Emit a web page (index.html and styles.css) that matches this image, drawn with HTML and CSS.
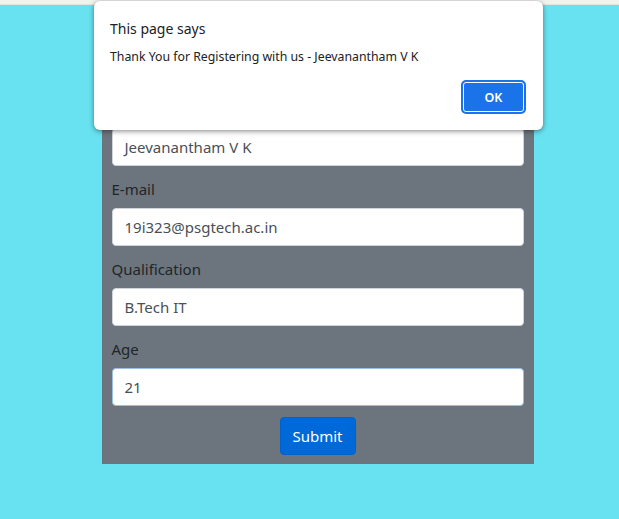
FILE: index.html
```html
<!DOCTYPE html>
<html lang="en">
<head>
<meta charset="utf-8">
<title>Registration</title>
<link rel="stylesheet" href="styles.css">
</head>
<body>
<div class="topbar"></div>
<main class="page">
  <form class="panel">
    <div class="group">
      <label class="label">Name</label>
      <div class="input">Jeevanantham V K</div>
    </div>
    <div class="group">
      <label class="label">E-mail</label>
      <div class="input">19i323@psgtech.ac.in</div>
    </div>
    <div class="group">
      <label class="label">Qualification</label>
      <div class="input">B.Tech IT</div>
    </div>
    <div class="group group-last">
      <label class="label">Age</label>
      <div class="input input-focus">21</div>
    </div>
    <div class="actions">
      <button type="button" class="submit">Submit</button>
    </div>
  </form>
</main>
<div class="dialog">
  <div class="dialog-title">This page says</div>
  <div class="dialog-msg">Thank You for Registering with us - Jeevanantham V K</div>
  <div class="dialog-actions">
    <button type="button" class="ok">OK</button>
  </div>
</div>
</body>
</html>
```
FILE: styles.css
```css
* { box-sizing: border-box; }
html, body { margin: 0; padding: 0; }
body {
  background: #68e2f0;
  font-family: "Noto Sans", "Open Sans", sans-serif;
  width: 619px;
  height: 519px;
  overflow: hidden;
  position: relative;
}
.topbar {
  height: 5px;
  background: #f1f1f1;
  border-bottom: 1px solid #e2e2e2;
}
.page {
  display: flex;
  justify-content: center;
  padding-left: 17px;
}
.panel {
  width: 432px;
  background: #6c757d;
  padding: 97px 10px 9px;
  margin-right: 1px;
}
.group {
  display: flex;
  flex-direction: column;
  margin-bottom: 16px;
}
.group-last { margin-bottom: 11px; }
.label {
  font-size: 15px;
  line-height: 14px;
  height: 14px;
  margin-bottom: 12px;
  color: #212529;
}
.input {
  height: 38px;
  border: 1px solid #ced4da;
  border-radius: 4px;
  background: #fff;
  padding: 0 12px;
  font-size: 15px;
  line-height: 36px;
  color: #495057;
}
.input-focus { border-color: #9cbfe3; }
.actions {
  display: flex;
  justify-content: center;
}
.submit {
  width: 76px;
  height: 38px;
  background: #0069d9;
  border: 1px solid #0062cc;
  border-radius: 4px;
  color: #fff;
  font-family: inherit;
  font-size: 15px;
  padding: 0;
}
.dialog {
  position: absolute;
  left: 94px;
  top: 1px;
  width: 449px;
  height: 129px;
  background: #fff;
  border-radius: 6px;
  box-shadow: 0 1px 4px rgba(0,0,0,0.35), 0 2px 6px rgba(0,0,0,0.15);
  padding: 19px 16px 0 16px;
  color: #202124;
}
.dialog-title {
  font-size: 14px;
  line-height: 18px;
}
.dialog-msg {
  margin-top: 11px;
  font-size: 12.3px;
  line-height: 16px;
}
.dialog-actions {
  display: flex;
  justify-content: flex-end;
  margin-top: 15px;
  margin-right: 1px;
}
.ok {
  width: 65px;
  height: 34px;
  background: #1a73e8;
  color: #fff;
  border: 2px solid #1a73e8;
  box-shadow: inset 0 0 0 1px #fff;
  border-radius: 5px;
  font-family: inherit;
  font-size: 12.5px;
  font-weight: 600;
  padding: 0;
}
```
